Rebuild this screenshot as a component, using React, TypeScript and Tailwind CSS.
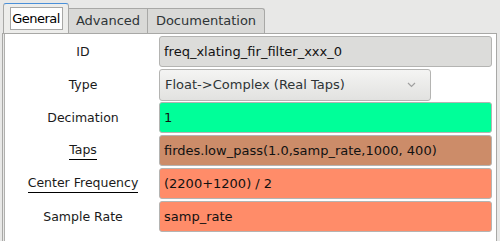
import React from "react";

const font = { fontFamily: '"DejaVu Sans", "Liberation Sans", sans-serif' };

function Label({ text, underline }: { text: string; underline?: boolean }) {
  return (
    <div className="w-[152px] h-[31px] flex items-center justify-center text-[12.5px] text-[#1a1a1a]">
      <span className={underline ? "border-b border-black leading-[18px]" : "leading-[18px]"}>{text}</span>
    </div>
  );
}

function Field({ text, bg }: { text: string; bg: string }) {
  return (
    <div
      className={`w-[333px] h-[31px] rounded-[3px] border border-[#b4b4b2] flex items-center pl-[4px] text-[13px] text-[#111] ${bg}`}
    >
      {text}
    </div>
  );
}

export default function App() {
  return (
    <div className="w-[500px] h-[241px] bg-[#e8e8e7] overflow-hidden flex flex-col" style={font}>
      <div className="h-[33px] flex items-end pl-[3px] shrink-0">
        <div className="relative w-[66px] h-[30px] bg-[#ededeb] border border-b-0 border-[#a8a8a6] border-t-[#4a90d9] rounded-t-[3px] flex items-start justify-center pt-[3px]">
          <div className="w-[53px] h-[23px] bg-white border border-[#a8a8a6] flex items-center justify-center text-[13px] tracking-[-0.5px] text-black">
            General
          </div>
        </div>
        <div className="w-[79px] h-[25px] bg-[#d9d9d7] border border-b-0 border-l-0 border-[#a8a8a6] flex items-center justify-center text-[13px] text-[#2e3436]">
          Advanced
        </div>
        <div className="w-[117px] h-[25px] bg-[#d9d9d7] border border-b-0 border-l-0 border-[#a8a8a6] rounded-tr-[3px] flex items-center justify-center text-[13px] text-[#2e3436]">
          Documentation
        </div>
      </div>
      <div className="flex-1 ml-[2px] mr-[3px] border border-b-0 border-[#a8a8a6] bg-[#e8e8e7] pl-[1px]">
        <div className="h-full border-l border-[#b0b0ae] bg-white pl-[2px] pt-[2px] flex flex-col gap-[2px]">
          <div className="flex">
            <Label text="ID" />
            <Field text="freq_xlating_fir_filter_xxx_0" bg="bg-[#dcdcda]" />
          </div>
          <div className="flex">
            <Label text="Type" />
            <div className="w-[272px] h-[32px] rounded-[3px] border border-[#b4b4b2] bg-gradient-to-b from-[#f4f4f3] to-[#e2e2e0] flex items-center pl-[5px] pr-[14px] text-[13px] text-[#2e3436]">
              <span className="flex-1">Float-&gt;Complex (Real Taps)</span>
              <svg width="9" height="6" viewBox="0 0 9 6">
                <path d="M1 1 L4.5 4.5 L8 1" stroke="#a0a0a0" strokeWidth="1.2" fill="none" />
              </svg>
            </div>
          </div>
          <div className="flex -mt-[1px]">
            <Label text="Decimation" />
            <Field text="1" bg="bg-[#00ff99]" />
          </div>
          <div className="flex">
            <Label text="Taps" underline />
            <Field text="firdes.low_pass(1.0,samp_rate,1000, 400)" bg="bg-[#cc8c69]" />
          </div>
          <div className="flex">
            <Label text="Center Frequency" underline />
            <Field text="(2200+1200) / 2" bg="bg-[#ff8c69]" />
          </div>
          <div className="flex">
            <Label text="Sample Rate" />
            <Field text="samp_rate" bg="bg-[#ff8c69]" />
          </div>
        </div>
      </div>
    </div>
  );
}
